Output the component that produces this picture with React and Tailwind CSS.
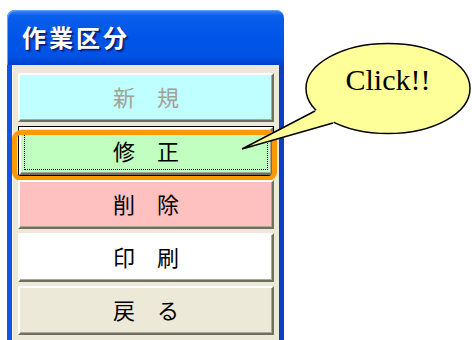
import React from "react";

const jp = { fontFamily: '"Noto Sans CJK JP", "Noto Sans", sans-serif' };

function XpButton({ label, bg, muted, focused }) {
  const face = (
    <div
      className={`relative flex h-full w-full items-center justify-center border-2 border-t-white border-l-white border-r-[#716f64] border-b-[#716f64] shadow-[inset_-1px_-1px_0_#aca899] ${bg}`}
    >
      {focused && (
        <div className="absolute inset-[3px] border border-dotted border-black" />
      )}
      <span
        className={`pb-[3px] text-[22px] leading-none ${muted ? "text-[#a3a295]" : "text-black"}`}
        style={jp}
      >
        {label}
      </span>
    </div>
  );

  if (focused) {
    return (
      <div className="relative h-[50px]">
        <div className="h-full border border-black">{face}</div>
        {/* highlight marker */}
        <div className="absolute -left-[6px] -right-[3px] top-[4px] -bottom-[5px] rounded-[9px] border-[5px] border-[#ff9900]" />
      </div>
    );
  }
  return <div className="h-[49px]">{face}</div>;
}

export default function App() {
  const buttons = [
    { label: "新\u3000規", bg: "bg-[#c0ffff]", muted: true },
    { label: "修\u3000正", bg: "bg-[#c0ffc0]", focused: true },
    { label: "削\u3000除", bg: "bg-[#ffc0c0]" },
    { label: "印\u3000刷", bg: "bg-white" },
    { label: "戻\u3000る", bg: "bg-[#ece9d8]" },
  ];

  return (
    <div className="relative h-[340px] w-[472px] overflow-hidden bg-white">
      {/* window */}
      <div className="ml-[7px] mt-[10px] flex w-[277px] flex-col">
        <div className="flex h-[55px] items-center rounded-t-[8px] bg-[linear-gradient(180deg,#3d8ef8_0%,#0b5fec_10%,#0056e8_45%,#0052e4_85%,#0040cc_100%)] pl-[15px] pb-[2px] shadow-[inset_1px_1px_0_#5fa2ff]">
          <span
            className="text-[24px] font-bold leading-none tracking-[3px] text-white [text-shadow:1px_1px_0_#0a1e70,2px_2px_1px_#0a2a90]"
            style={jp}
          >
            作業区分
          </span>
        </div>
        <div className="flex h-[275px] flex-col gap-[4px] border-x-[5px] border-l-[#1055e6] border-r-[#0a3fc0] bg-[#ece9d8] pl-[6px] pr-[5px] pt-[8px] shadow-[inset_1px_0_0_#f8f6ec]">
          {buttons.map((b) => (
            <XpButton key={b.label} {...b} />
          ))}
        </div>
      </div>

      {/* speech bubble */}
      <svg
        className="pointer-events-none absolute left-0 top-0"
        width="472"
        height="340"
        viewBox="0 0 472 340"
      >
        <ellipse cx="388" cy="88.5" rx="82" ry="45" fill="#ffff99" stroke="#000" strokeWidth="1.5" />
        <polygon points="315,111 242,149 333,123 340,115 322,106" fill="#ffff99" />
        <polyline points="315,111 242,149 333,123" fill="none" stroke="#000" strokeWidth="1.5" strokeLinejoin="miter" />
      </svg>
      <div
        className="absolute left-[306px] top-[65px] w-[164px] text-center text-[30px] leading-none text-black"
        style={{ fontFamily: '"Liberation Serif", serif' }}
      >
        Click!!
      </div>
    </div>
  );
}
